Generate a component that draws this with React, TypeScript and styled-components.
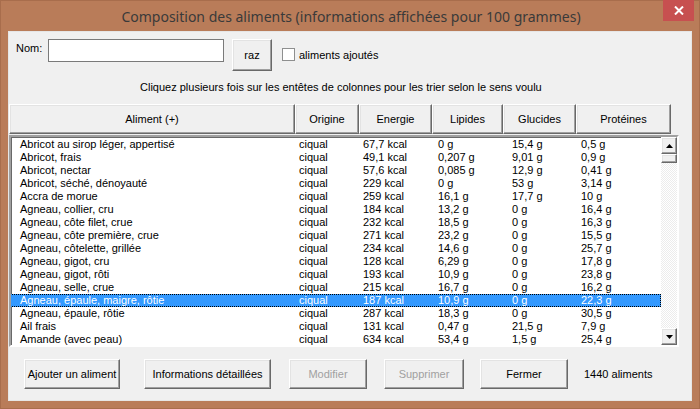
import React from "react";
import styled, { createGlobalStyle, css } from "styled-components";

const Global = createGlobalStyle`
  html, body { margin: 0; padding: 0; background: #b97c59; }
  body { width: 700px; height: 409px; overflow: hidden; }
  * { box-sizing: border-box; }
`;

const UI = `"Liberation Sans", Arial, sans-serif`;

const Window = styled.div`
  width: 700px;
  height: 409px;
  background: #b97c59;
  border: 1px solid #a86d4c;
  padding: 0 7px 7px 7px;
  display: flex;
  flex-direction: column;
`;

const TitleBar = styled.div`
  height: 30px;
  display: flex;
  align-items: center;
  justify-content: center;
  position: relative;
`;

const Title = styled.div`
  font-family: "Noto Sans", "Open Sans", sans-serif;
  font-size: 14px;
  color: #3a3a3a;
  margin-top: 0px;
  margin-left: 2px;
`;

const CloseBtn = styled.div`
  position: absolute;
  top: -1px;
  right: -2px;
  width: 31px;
  height: 21px;
  background: #c75050;
  display: flex;
  align-items: center;
  justify-content: center;
`;

const Client = styled.div`
  flex: 1;
  background: #f0f0f0;
  border: 1px solid #e6e6e6;
  font-family: ${UI};
  font-size: 11px;
  color: #000;
  display: flex;
  flex-direction: column;
`;

const TopRow = styled.div`
  display: flex;
  align-items: flex-start;
  padding: 7px 0 0 7px;
  height: 40px;
`;

const Label = styled.span`
  margin-top: 3px;
  width: 32px;
`;

const TextBox = styled.div`
  width: 176px;
  height: 23px;
  background: #fff;
  border: 1px solid #7a7a7a;
`;

const raised = css`
  background: #f0f0f0;
  border: 1px solid;
  border-color: #ffffff #696969 #696969 #ffffff;
  box-shadow: inset -1px -1px 0 #a0a0a0, inset 1px 1px 0 #e3e3e3;
`;

const Button = styled.div<{ $w: number; $ml?: number; $disabled?: boolean; $h?: number }>`
  ${raised};
  width: ${(p) => p.$w}px;
  height: ${(p) => p.$h ?? 30}px;
  margin-left: ${(p) => p.$ml ?? 0}px;
  display: flex;
  align-items: center;
  justify-content: center;
  color: ${(p) => (p.$disabled ? "#a0a0a0" : "#000")};
  white-space: nowrap;
  flex-shrink: 0;
`;

const CheckWrap = styled.div`
  display: flex;
  align-items: center;
  margin-left: 10px;
  margin-top: 9px;
  gap: 4px;
`;

const CheckBox = styled.div`
  width: 13px;
  height: 13px;
  background: #fff;
  border: 1px solid #8e8f8f;
`;

const Hint = styled.div`
  height: 32px;
  padding-left: 131px;
  padding-top: 9px;
`;

const HeaderRow = styled.div`
  display: flex;
  height: 30px;
`;

const HeaderCell = styled.div<{ $w: number }>`
  ${raised};
  width: ${(p) => p.$w}px;
  height: 30px;
  display: flex;
  align-items: center;
  justify-content: center;
  flex-shrink: 0;
`;

const ListBox = styled.div`
  margin-top: 1px;
  width: 670px;
  height: 212px;
  background: #fff;
  border: 2px solid;
  border-color: #a0a0a0 #ffffff #ffffff #a0a0a0;
  box-shadow: inset 1px 1px 0 #696969;
  display: flex;
`;

const Rows = styled.div`
  flex: 1;
  padding-top: 1px;
  overflow: hidden;
`;

const Row = styled.div<{ $sel?: boolean }>`
  display: grid;
  grid-template-columns: 279px 64px 75px 74px 69px 1fr;
  height: 13px;
  line-height: 13px;
  padding-left: 9px;
  white-space: nowrap;
  ${(p) =>
    p.$sel &&
    css`
      background: #3399ff;
      color: #fff;
      outline: 1px dotted #000;
      outline-offset: -1px;
      margin-left: -1px;
      padding-left: 10px;
    `}
`;

const ScrollBar = styled.div`
  width: 16px;
  display: flex;
  flex-direction: column;
  background: repeating-conic-gradient(#ffffff 0 25%, #ececec 0 50%) 0 0 / 2px 2px;
`;

const SBtn = styled.div<{ $h: number }>`
  ${raised};
  height: ${(p) => p.$h}px;
  display: flex;
  align-items: center;
  justify-content: center;
  flex-shrink: 0;
`;

const Spacer = styled.div`
  flex: 1;
`;

const BottomRow = styled.div`
  display: flex;
  align-items: center;
  margin-top: 12px;
  padding-left: 15px;
`;

const Count = styled.span`
  margin-left: 16px;
  margin-top: -1px;
`;

const rows: [string, string, string, string, string][] = [
  ["Abricot au sirop léger, appertisé", "67,7 kcal", "0 g", "15,4 g", "0,5 g"],
  ["Abricot, frais", "49,1 kcal", "0,207 g", "9,01 g", "0,9 g"],
  ["Abricot, nectar", "57,6 kcal", "0,085 g", "12,9 g", "0,41 g"],
  ["Abricot, séché, dénoyauté", "229 kcal", "0 g", "53 g", "3,14 g"],
  ["Accra de morue", "259 kcal", "16,1 g", "17,7 g", "10 g"],
  ["Agneau, collier, cru", "184 kcal", "13,2 g", "0 g", "16,4 g"],
  ["Agneau, côte filet, crue", "232 kcal", "18,5 g", "0 g", "16,3 g"],
  ["Agneau, côte première, crue", "271 kcal", "23,2 g", "0 g", "15,5 g"],
  ["Agneau, côtelette, grillée", "234 kcal", "14,6 g", "0 g", "25,7 g"],
  ["Agneau, gigot, cru", "128 kcal", "6,29 g", "0 g", "17,8 g"],
  ["Agneau, gigot, rôti", "193 kcal", "10,9 g", "0 g", "23,8 g"],
  ["Agneau, selle, crue", "215 kcal", "16,7 g", "0 g", "16,2 g"],
  ["Agneau, épaule, maigre, rôtie", "187 kcal", "10,9 g", "0 g", "22,3 g"],
  ["Agneau, épaule, rôtie", "287 kcal", "18,3 g", "0 g", "30,5 g"],
  ["Ail frais", "131 kcal", "0,47 g", "21,5 g", "7,9 g"],
  ["Amande (avec peau)", "634 kcal", "53,4 g", "1,5 g", "25,4 g"],
];

const headers: [string, number][] = [
  ["Aliment (+)", 286],
  ["Origine", 64],
  ["Energie", 73],
  ["Lipides", 71],
  ["Glucides", 73],
  ["Protéines", 95],
];

export default function App() {
  return (
    <>
      <Global />
      <Window>
        <TitleBar>
          <Title>Composition des aliments (informations affichées pour 100 grammes)</Title>
          <CloseBtn>
            <svg width="10" height="9" viewBox="0 0 10 9">
              <path d="M1 0.5 L9 8.5 M9 0.5 L1 8.5" stroke="#fff" strokeWidth="2" />
            </svg>
          </CloseBtn>
        </TitleBar>
        <Client>
          <TopRow>
            <Label>Nom:</Label>
            <TextBox />
            <Button $w={40} $h={32} $ml={8}>raz</Button>
            <CheckWrap>
              <CheckBox />
              <span>aliments ajoutés</span>
            </CheckWrap>
          </TopRow>
          <Hint>Cliquez plusieurs fois sur les entêtes de colonnes pour les trier selon le sens voulu</Hint>
          <HeaderRow>
            {headers.map(([h, w]) => (
              <HeaderCell key={h} $w={w}>{h}</HeaderCell>
            ))}
          </HeaderRow>
          <ListBox>
            <Rows>
              {rows.map((r, i) => (
                <Row key={r[0]} $sel={i === 12}>
                  <span>{r[0]}</span>
                  <span>ciqual</span>
                  <span>{r[1]}</span>
                  <span>{r[2]}</span>
                  <span>{r[3]}</span>
                  <span>{r[4]}</span>
                </Row>
              ))}
            </Rows>
            <ScrollBar>
              <SBtn $h={17}>
                <svg width="7" height="4" viewBox="0 0 7 4"><path d="M3.5 0 L7 4 L0 4 Z" fill="#000" /></svg>
              </SBtn>
              <SBtn $h={9} />
              <Spacer />
              <SBtn $h={17}>
                <svg width="7" height="4" viewBox="0 0 7 4"><path d="M0 0 L7 0 L3.5 4 Z" fill="#000" /></svg>
              </SBtn>
            </ScrollBar>
          </ListBox>
          <BottomRow>
            <Button $w={96}>Ajouter un aliment</Button>
            <Button $w={127} $ml={24}>Informations détaillées</Button>
            <Button $w={78} $ml={18} $disabled>Modifier</Button>
            <Button $w={80} $ml={17} $disabled>Supprimer</Button>
            <Button $w={88} $ml={16}>Fermer</Button>
            <Count>1440 aliments</Count>
          </BottomRow>
        </Client>
      </Window>
    </>
  );
}
